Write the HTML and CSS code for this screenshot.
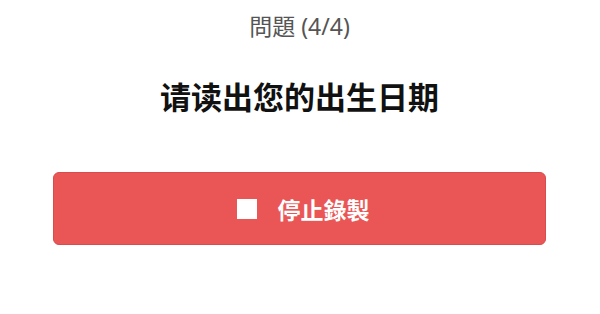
FILE: index.html
```html
<!DOCTYPE html>
<html lang="zh">
<head>
<meta charset="utf-8">
<link rel="stylesheet" href="styles.css">
</head>
<body>
<main class="page">
  <div class="progress">問題 (4/4)</div>
  <h1 class="question">请读出您的出生日期</h1>
  <button class="stop-btn" type="button">
    <span class="stop-icon"></span>
    <span class="stop-label">停止錄製</span>
  </button>
</main>
</body>
</html>
```
FILE: styles.css
```css
html, body {
  margin: 0;
  padding: 0;
  background: #ffffff;
}
.page {
  width: 600px;
  height: 314px;
  box-sizing: border-box;
  padding: 11px 54px 0 53px;
  display: flex;
  flex-direction: column;
  align-items: stretch;
}
.progress {
  text-align: center;
  font-family: "Noto Sans", "Noto Sans CJK TC", sans-serif;
  font-size: 23px;
  line-height: 30px;
  color: #555555;
}
.question {
  margin: 35px 0 0 0;
  text-align: center;
  font-family: "Noto Sans CJK SC", sans-serif;
  font-weight: 700;
  font-size: 31px;
  line-height: 40px;
  color: #111111;
}
.stop-btn {
  margin-top: 56px;
  height: 73px;
  border: 1px solid #d94b4c;
  border-radius: 6px;
  background: #ea5656;
  display: flex;
  align-items: center;
  justify-content: center;
  gap: 21px;
  padding: 0 0 0 7px;
  cursor: pointer;
}
.stop-icon {
  width: 20px;
  height: 20px;
  background: #ffffff;
}
.stop-label {
  font-family: "Noto Sans CJK TC", sans-serif;
  font-weight: 700;
  font-size: 23px;
  line-height: 30px;
  color: #ffffff;
}
```
